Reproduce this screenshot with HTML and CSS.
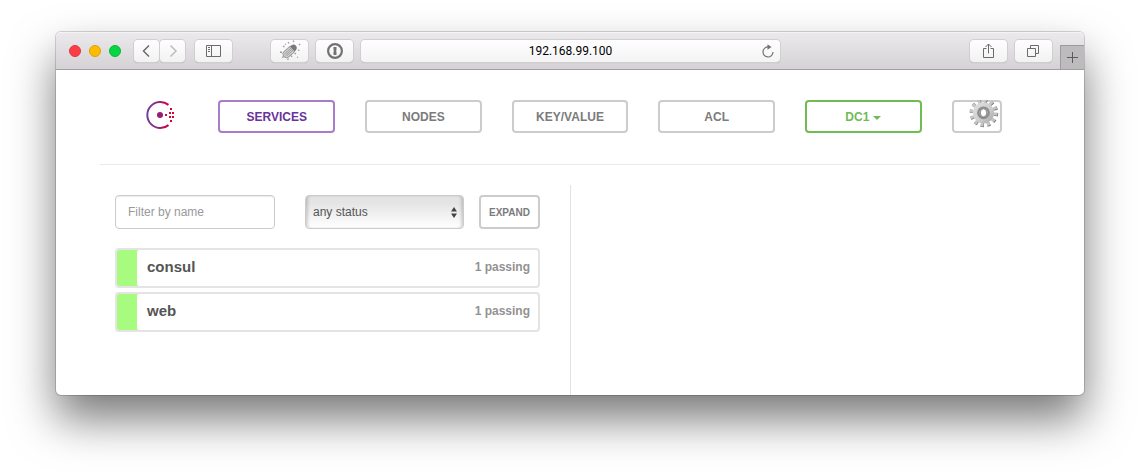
FILE: index.html
```html
<!DOCTYPE html>
<html lang="en">
<head>
    <meta charset="UTF-8">
    <meta name="viewport" content="width=device-width, initial-scale=1.0">
    <title>Consul</title>
    <link rel="stylesheet" href="styles.css">
</head>
<body>
    <div class="window">
        <header class="toolbar">
            <div class="toolbar-left">
                <div class="lights">
                    <span class="light red"></span>
                    <span class="light yellow"></span>
                    <span class="light green"></span>
                </div>
                <div class="history">
                    <button class="tool" aria-label="Back">
                        <svg width="10" height="14" viewBox="0 0 10 14" fill="none" stroke="#6b6b6b" stroke-width="1.5"><path d="M7 1.500 1.500 7 7 12.500"/></svg>
                    </button>
                    <button class="tool" aria-label="Forward">
                        <svg width="10" height="14" viewBox="0 0 10 14" fill="none" stroke="#bdbdbd" stroke-width="1.5"><path d="M2.500 1.500 8 7l-5.500 5.500"/></svg>
                    </button>
                </div>
                <button class="tool" aria-label="Sidebar">
                    <svg width="15" height="12" viewBox="0 0 15 12" fill="none" stroke="#6b6b6b"><path d="M.5.5h14v11H.5zM5.500.5v11M2 2.500h2M2 4.500h2M2 6.500h2"/></svg>
                </button>
                <div class="extensions">
                    <button class="tool" aria-label="Debugger">
                        <svg width="22" height="22" viewBox="0 0 22 22">
                            <g transform="rotate(-42 11 11)">
                                <rect x="3" y="7.500" width="13" height="7" rx="3.500" fill="#d2d2d2" stroke="#9c9c9c"/>
                                <path d="M5 9.500h9M4.500 11h10M5 12.500h9" stroke="#8c8c8c" stroke-width=".7"/>
                                <path d="M14 7.500q5 0 5 3.500t-5 3.500z" fill="#7a7a7a"/>
                            </g>
                            <path d="M4 6l1.500 1M9 2l1 1.500M14 .5l1 1.500M1 12l2 .5M3 17.500l2-1M8.500 20l1-1.500M13 17l-1-1.500M17 14l-1.500-1M19 10l1.500.5M20 5l1-1M18 17l1 .5M6 4l1 .5" stroke="#999" stroke-width="1.3"/>
                        </svg>
                    </button>
                    <button class="tool" aria-label="1Password">
                        <svg width="16" height="16" viewBox="0 0 16 16"><circle cx="8" cy="8" r="6.900" fill="none" stroke="#727272" stroke-width="2.200"/><path d="M6.500 4h3v3.300l-.6.7.6.7V12h-3V8.700l.6-.7-.6-.7z" fill="#727272"/></svg>
                    </button>
                </div>
            </div>
            <div class="address">
                <input class="address-input" type="text" value="192.168.99.100" aria-label="Address">
                <button class="reload" aria-label="Reload">
                    <svg width="12" height="14" viewBox="0 0 12 14"><path d="M6.500 3A5 5 0 1 0 11 8" fill="none" stroke="#727272" stroke-width="1.200"/><path d="M5.500.2 9.500 3l-4 2.800z" fill="#727272"/></svg>
                </button>
            </div>
            <div class="toolbar-right">
                <button class="tool" aria-label="Share">
                    <svg width="11" height="16" viewBox="0 0 11 16" fill="none" stroke="#6b6b6b"><path d="M3.500 5.500h-3v9h10v-9h-3M5.500 10.500V1M2.500 4l3-3 3 3"/></svg>
                </button>
                <button class="tool" aria-label="Show tabs">
                    <svg width="13" height="13" viewBox="0 0 13 13" fill="none" stroke="#6b6b6b"><path d="M.5 3.500h8v8h-8zM3.500 3.500v-3h8v8h-3"/></svg>
                </button>
            </div>
            <button class="new-tab" aria-label="New tab">
                <svg width="11" height="11" viewBox="0 0 11 11" stroke="#5c5c5c"><path d="M0 5.500h11M5.500 0v11"/></svg>
            </button>
        </header>

        <main class="page">
            <nav class="topbar">
                <a class="logo" href="#" aria-label="Consul">
                    <svg width="30" height="30" viewBox="0 0 30 30">
                        <defs>
                            <linearGradient id="ring" gradientUnits="userSpaceOnUse" x1="1" y1="15" x2="24" y2="15">
                                <stop offset="0" stop-color="#7040a4"/>
                                <stop offset=".45" stop-color="#8c2b86"/>
                                <stop offset="1" stop-color="#d1003f"/>
                            </linearGradient>
                        </defs>
                        <path d="M23.500 4.900A13 13 0 1 0 23.500 25.100" fill="none" stroke="url(#ring)" stroke-width="2"/>
                        <circle cx="15" cy="15" r="3" fill="#961d70"/>
                        <path d="M20 14h2v2h-2z" fill="#b5105a"/>
                        <path d="M24 12h2v2h-2zM27 12h2v2h-2zM24 16h2v2h-2zM27 16h2v2h-2zM25 8h2v2h-2zM25 20h2v2h-2z" fill="#d5002f"/>
                    </svg>
                </a>
                <a class="btn active" href="#">SERVICES</a>
                <a class="btn" href="#">NODES</a>
                <a class="btn" href="#">KEY/VALUE</a>
                <a class="btn" href="#">ACL</a>
                <button class="btn datacenter">DC1 <span class="caret"></span></button>
                <button class="btn settings" aria-label="Settings">
                    <svg class="gear" width="32" height="28" viewBox="0 0 32 28">
                        <defs>
                            <linearGradient id="steel" x1="0" y1="0" x2="1" y2="1">
                                <stop offset="0" stop-color="#e2e2e2"/>
                                <stop offset=".6" stop-color="#cbcbcb"/>
                                <stop offset="1" stop-color="#a2a2a2"/>
                            </linearGradient>
                        </defs>
                        <circle cx="16" cy="13" r="12" fill="none" stroke="#777" stroke-width="4.500" stroke-dasharray="3 3.283"/>
                        <circle cx="15.500" cy="12.500" r="12" fill="none" stroke="#c6c6c6" stroke-width="4" stroke-dasharray="2.800 3.483"/>
                        <circle cx="15.500" cy="12.800" r="10.600" fill="url(#steel)"/>
                        <circle cx="15.500" cy="12.800" r="5.300" fill="#b4b4b4" stroke="#918c8c" stroke-width="2.200"/>
                        <ellipse cx="15.500" cy="12.800" rx="3.200" ry="4" fill="#fff" stroke="#777" stroke-width=".8"/>
                    </svg>
                </button>
            </nav>

            <div class="columns">
                <section class="services">
                    <form class="filters">
                        <input class="field" type="text" placeholder="Filter by name" aria-label="Filter by name">
                        <div class="select-wrap">
                            <select class="field status" aria-label="Status">
                                <option>any status</option>
                                <option>passing</option>
                                <option>failing</option>
                            </select>
                            <svg class="arrows" width="6" height="11" viewBox="0 0 6 11"><path d="M0 4.500 3 0l3 4.500zM0 6.500 3 11l3-4.500z" fill="#444"/></svg>
                        </div>
                        <button class="btn expand" type="button">EXPAND</button>
                    </form>
                    <a class="service" href="#">
                        <span class="service-name">consul</span>
                        <span class="service-checks">1 passing</span>
                    </a>
                    <a class="service" href="#">
                        <span class="service-name">web</span>
                        <span class="service-checks">1 passing</span>
                    </a>
                </section>
                <section class="detail"></section>
            </div>
        </main>
    </div>
</body>
</html>
```
FILE: styles.css
```css
* {
    box-sizing: border-box;
}

body {
    margin: 0;
    padding: 32px 56px 80px;
    background-color: white;
    font-family: "Liberation Sans", Arial, sans-serif;
    font-size: 12px;
    color: #555;
}

button,
input,
select {
    font-family: inherit;
    margin: 0;
}

a {
    text-decoration: none;
}

svg {
    display: block;
}

.window {
    border-radius: 5px;
    background-color: white;
    box-shadow: 0 0 0 1px rgba(0, 0, 0, 0.16), 0 24px 45px rgba(0, 0, 0, 0.53);
}

/* Browser toolbar */
.toolbar {
    position: relative;
    display: grid;
    grid-template-columns: 1fr 420px 1fr;
    align-items: center;
    height: 38px;
    border-bottom: 1px solid #a09ea0;
    border-top: 1px solid #f5f4f5;
    border-radius: 5px 5px 0 0;
    background: linear-gradient(#ebe9eb, #d4d2d4);
}

.toolbar-left,
.toolbar-right,
.lights,
.history,
.extensions {
    display: flex;
    align-items: center;
}

.toolbar-left {
    padding-left: 13px;
}

.toolbar-right {
    justify-content: flex-end;
    gap: 8px;
    padding-right: 32px;
}

.lights {
    gap: 8px;
    margin-right: 13px;
}

.light {
    width: 12px;
    height: 12px;
    border-radius: 50%;
}

.red {
    background-color: #fc3d46;
    border: 1px solid #e2343c;
}

.yellow {
    background-color: #fdbc02;
    border: 1px solid #dfa104;
}

.green {
    background-color: #06d544;
    border: 1px solid #08b83a;
}

.history {
    gap: 1px;
    margin-right: 10px;
}

.extensions {
    gap: 8px;
    margin-left: 39px;
}

.tool {
    display: flex;
    align-items: center;
    justify-content: center;
    width: 37px;
    height: 22px;
    padding: 0;
    border: 0;
    border-radius: 4px;
    background: linear-gradient(#fefefe, #f3f2f3);
    box-shadow: 0 0 0 1px #d0ced0, 0 1px 1px #aaa8aa;
}

.history .tool {
    width: 25px;
}

.address {
    position: relative;
    padding-left: 1px;
}

.address-input {
    display: block;
    width: 100%;
    height: 22px;
    padding: 0 24px;
    border: 0;
    border-radius: 4px;
    background: linear-gradient(#fefefe, #f5f4f5);
    box-shadow: 0 0 0 1px #d0ced0, 0 1px 1px #aaa8aa;
    font-family: Roboto, sans-serif;
    font-size: 12px;
    text-align: center;
    color: #000;
}

.reload {
    position: absolute;
    top: 4px;
    right: 6px;
    padding: 0;
    border: 0;
    background: none;
}

.new-tab {
    position: absolute;
    right: 0;
    bottom: 0;
    display: flex;
    align-items: center;
    justify-content: center;
    width: 24px;
    height: 24px;
    padding: 0;
    border: 1px solid #9d9b9d;
    border-width: 1px 0 0 1px;
    background-color: #bdbbbd;
}

/* Consul page */
.page {
    max-width: 940px;
    margin: 0 auto;
}

.topbar {
    display: grid;
    grid-template-columns: repeat(12, minmax(0, 1fr));
    gap: 30px;
    padding: 30px 45px 31px;
    border-bottom: 1px solid #eaeaea;
}

.btn {
    grid-column: span 2;
    display: flex;
    align-items: center;
    justify-content: center;
    height: 33px;
    padding: 0;
    border: 2px solid #ccc;
    border-radius: 4px;
    background-color: white;
    font-size: 12px;
    font-weight: bold;
    color: #7b7b7b;
}

.active {
    border-color: #a87cc8;
    color: #69339a;
}

.datacenter {
    gap: 4px;
    border-color: #70bb53;
    color: #70bb53;
}

.caret {
    margin-top: 3px;
    border-top: 4px solid;
    border-left: 4px solid transparent;
    border-right: 4px solid transparent;
}

.settings {
    grid-column: span 1;
    position: relative;
    width: 50px;
}

.gear {
    position: absolute;
    top: -2px;
    left: 14px;
}

.columns {
    display: grid;
    grid-template-columns: 1fr 1fr;
    padding-top: 20px;
}

.services {
    padding: 10px 30px 0 15px;
}

.detail {
    min-height: 210px;
    border-left: 1px solid #e1e1e1;
}

.filters {
    display: flex;
    margin-bottom: 19px;
}

.field {
    width: 160px;
    height: 34px;
    padding: 0 12px;
    border: 1px solid #ccc;
    border-radius: 4px;
    background-color: white;
    box-shadow: inset 0 1px 1px rgba(0, 0, 0, 0.08);
    font-size: 12px;
    color: #555;
}

.field::placeholder {
    color: #999;
}

.select-wrap {
    position: relative;
    margin: 0 15px 0 30px;
}

.status {
    display: block;
    width: 159px;
    padding: 0 7px;
    appearance: none;
    background: linear-gradient(#e4e4e4 20%, #fff);
    box-shadow: inset 3px 0 3px -1px rgba(0, 0, 0, 0.16), inset -3px 0 3px -1px rgba(0, 0, 0, 0.16);
}

.arrows {
    position: absolute;
    top: 12px;
    right: 7px;
}

.expand {
    flex: 1;
    height: 34px;
    font-size: 10px;
}

.service {
    display: flex;
    align-items: center;
    justify-content: space-between;
    height: 40px;
    margin-bottom: 4px;
    padding: 0 8px 3px 10px;
    border: 2px solid #e4e4e4;
    border-radius: 4px;
    box-shadow: inset 20px 0 0 #a7fc80;
    font-weight: bold;
}

.service-name {
    padding-left: 20px;
    font-size: 15px;
    color: #555;
}

.service-checks {
    color: #929292;
}
```
